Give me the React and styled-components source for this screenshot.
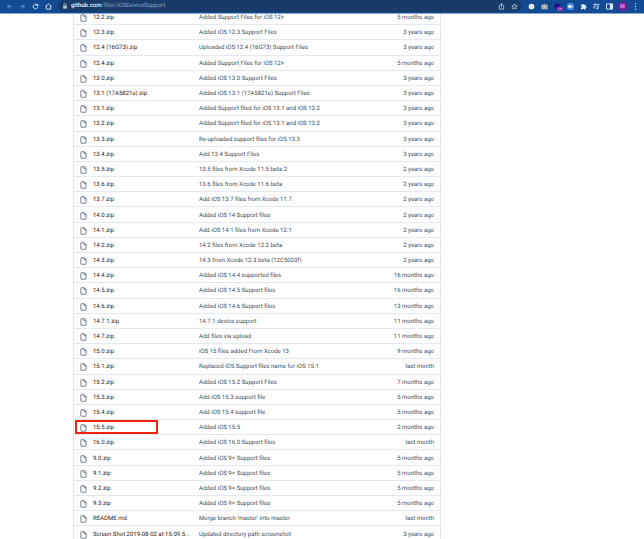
import React from "react";
import styled, { createGlobalStyle } from "styled-components";

const GlobalStyle = createGlobalStyle`
  * { box-sizing: border-box; }
  body {
    margin: 0;
    background: #fff;
    color: #4b535c;
    font: 6px/8px Roboto, "Liberation Sans", sans-serif;
    text-rendering: geometricPrecision;
    overflow: hidden;
  }
  button, input { font: inherit; color: inherit; }
`;

const BrowserBar = styled.header`
  position: sticky;
  top: 0;
  z-index: 2;
  display: flex;
  align-items: center;
  height: 14px;
  padding: 0 2px 1px 3px;
  background: #124a94;
  border-bottom: 1px solid #87a9d3;
`;

const ToolButton = styled.button`
  display: flex;
  align-items: center;
  justify-content: center;
  width: 13px;
  height: 11px;
  padding: 0;
  border: 0;
  background: none;
  color: ${(p) => (p.$dim ? "#6e94c6" : "#e4ecf7")};
  svg { display: block; overflow: visible; }
`;

const AddressBox = styled.div`
  flex: 1;
  display: flex;
  align-items: center;
  height: 12px;
  margin-left: 3px;
  padding: 0 1px 0 4px;
  border-radius: 6px;
  background: #183b6b;
  color: #b3c1d6;
`;

const Url = styled.a`
  flex: 1;
  margin-left: 3px;
  color: #8da3c2;
  text-decoration: none;
  white-space: nowrap;
  b { color: #f0f4fa; font-weight: 500; }
`;

const Extensions = styled.nav`
  display: flex;
  margin-left: 3px;
`;

const Avatar = styled.span`
  width: 9px;
  height: 9px;
  border-radius: 50%;
  background: #7b1fa2;
  color: #f3dcfa;
  font-size: 5px;
  line-height: 9px;
  text-align: center;
`;

const FileTable = styled.table`
  width: calc(100% - 276px);
  height: calc(100vh - 7px);
  margin: -4px 0 0 73px;
  border: solid #e3e8ee;
  border-width: 0 1px;
  border-spacing: 0;
  table-layout: fixed;
`;

const Cell = styled.td`
  padding: 2px 0 0;
  border-bottom: 1px solid #e5e9ee;
  vertical-align: middle;
  white-space: nowrap;
  color: #454d57;
`;

const NameCell = styled(Cell).attrs({ as: "th", scope: "row" })`
  position: relative;
  width: 125px;
  font-weight: 400;
  text-align: left;
`;

const AgeCell = styled(Cell)`
  width: 60px;
  padding-right: 6px;
  text-align: right;
`;

const FileLink = styled.a`
  display: flex;
  align-items: center;
  gap: 6px;
  padding-left: 6px;
  color: #1f2328;
  text-decoration: none;
  svg { flex: none; display: block; }
`;

const Highlight = styled.i`
  position: absolute;
  inset: 0 41px 0 1px;
  border: 2px solid #f3220b;
  pointer-events: none;
`;

const Glyph = ({ size = 7, children }) => (
  <svg width={size} height={size} viewBox="0 0 16 16" fill="none" stroke="currentColor" strokeWidth="2" aria-hidden="true">
    {children}
  </svg>
);

const FileIcon = () => (
  <svg width="7" height="8" viewBox="0 0 14 16" fill="none" stroke="#59636e" strokeWidth="1.6" aria-hidden="true">
    <path d="M2.6 1.500h6.2l3.4 3.5v8.6q0 .9-.9.9H2.6q-.9 0-.9-.9V2.4q0-.9.9-.9zM8.2 1.5v4h4" />
  </svg>
);

const navigation = [
  { label: "Back", dim: true, art: <path d="M14 8H3M8 3L3 8l5 5" /> },
  { label: "Forward", dim: true, art: <path d="M2 8h11M8 3l5 5-5 5" /> },
  { label: "Reload", art: <><path d="M12.6 5A5.4 5.4 0 1 0 13.4 9" /><path d="M14 1v6H8z" fill="currentColor" stroke="none" /></> },
  { label: "Home", art: <path d="M1 8l7-6 7 6M3 7v7h10V7" /> },
];

const pageActions = [
  { label: "Share", art: <path strokeWidth="1.5" d="M5 6H3v8h10V6h-2M8 10V1.5M5 4l3-3 3 3" /> },
  { label: "Bookmark", art: <path strokeWidth="1.5" d="M8 2l1.9 4 4.3.5-3.2 3 .9 4.4L8 11.7l-3.9 2.2.9-4.4-3.2-3L6.1 6z" /> },
];

const extensions = [
  { label: "JSON viewer", art: <><circle cx="8" cy="8" r="6.5" fill="#f4f2ea" stroke="none" /><path d="M6 5.5L4.5 8 6 10.5M10 5.5L11.5 8 10 10.5" stroke="#9aa0a8" strokeWidth="1" /></> },
  { label: "Screen capture", art: <><path d="M1 4h4l1-2h4l1 2h4v10H1z" fill="#b9b9b4" stroke="none" /><circle cx="8" cy="9" r="2.8" fill="#e8e8e3" stroke="#7b7f83" strokeWidth="1.5" /></> },
  { label: "Tag assistant", art: <><path d="M7-1l8 8-8 8-8-8z" fill="#2a0a92" stroke="none" /><rect x="7" y="9" width="13" height="9" rx="1" fill="#8435b5" stroke="none" /><path d="M9.5 13.5h3M14 13.5h4" stroke="#ddb5f0" /></> },
  { label: "Video meetings", art: <><rect x="0" y="0" width="16" height="16" rx="6" fill="#3f8df5" stroke="none" /><path d="M3 5h7v6H3zM10.5 8L13 5.5v5z" fill="#fff" stroke="none" /></> },
  { label: "Extensions", art: <path d="M2 4h3.5a2 2 0 1 1 4 0H13v3.5a2 2 0 1 1 0 4V15H9a2 2 0 1 0-4 0H2v-4a2 2 0 1 0 0-4z" fill="currentColor" stroke="none" /> },
  { label: "Media controls", art: <><path d="M1 3h9M1 7h7M1 11h4M11.5 12V3H15" /><circle cx="10" cy="12" r="2" fill="currentColor" stroke="none" /></> },
  { label: "Side panel", art: <><path d="M1 2h14v12H1z" /><path d="M9 2h6v12H9z" fill="currentColor" stroke="none" /></> },
];

const files = [
  ["12.2.zip", "Added Support Files for iOS 12+", "5 months ago"],
  ["12.3.zip", "Added iOS 12.3 Support Files", "3 years ago"],
  ["12.4 (16G73).zip", "Uploaded iOS 12.4 (16G73) Support Files", "3 years ago"],
  ["12.4.zip", "Added Support Files for iOS 12+", "5 months ago"],
  ["13.0.zip", "Added iOS 13.0 Support Files", "3 years ago"],
  ["13.1 (17A5821e).zip", "Added iOS 13.1 (17A5821e) Support Files", "3 years ago"],
  ["13.1.zip", "Added Support filed for iOS 13.1 and iOS 13.2", "3 years ago"],
  ["13.2.zip", "Added Support filed for iOS 13.1 and iOS 13.2", "3 years ago"],
  ["13.3.zip", "Re-uploaded support files for iOS 13.3", "3 years ago"],
  ["13.4.zip", "Add 13.4 Support Files", "3 years ago"],
  ["13.5.zip", "13.5 files from Xcode 11.5 beta 2", "2 years ago"],
  ["13.6.zip", "13.6 files from Xcode 11.6 beta", "2 years ago"],
  ["13.7.zip", "Add iOS 13.7 files from Xcode 11.7", "2 years ago"],
  ["14.0.zip", "Added iOS 14 Support files", "2 years ago"],
  ["14.1.zip", "Add iOS 14.1 files from Xcode 12.1", "2 years ago"],
  ["14.2.zip", "14.2 files from Xcode 12.2 beta", "2 years ago"],
  ["14.3.zip", "14.3 from Xcode 12.3 beta (12C5020f)", "2 years ago"],
  ["14.4.zip", "Added iOS 14.4 supported files", "16 months ago"],
  ["14.5.zip", "Added iOS 14.5 Support files", "16 months ago"],
  ["14.6.zip", "Added iOS 14.6 Support files", "13 months ago"],
  ["14.7.1.zip", "14.7.1 device support", "11 months ago"],
  ["14.7.zip", "Add files via upload", "11 months ago"],
  ["15.0.zip", "iOS 15 files added From Xcode 13", "9 months ago"],
  ["15.1.zip", "Replaced iOS Support files name for iOS 15.1", "last month"],
  ["15.2.zip", "Added iOS 15.2 Support Files", "7 months ago"],
  ["15.3.zip", "Add iOS 15.3 support file", "5 months ago"],
  ["15.4.zip", "Add iOS 15.4 support file", "5 months ago"],
  ["15.5.zip", "Added iOS 15.5", "2 months ago", true],
  ["16.0.zip", "Added iOS 16.0 Support files", "last month"],
  ["9.0.zip", "Added iOS 9+ Support files", "5 months ago"],
  ["9.1.zip", "Added iOS 9+ Support files", "5 months ago"],
  ["9.2.zip", "Added iOS 9+ Support files", "5 months ago"],
  ["9.3.zip", "Added iOS 9+ Support files", "5 months ago"],
  ["README.md", "Merge branch 'master' into master", "last month"],
  ["Screen Shot 2019-08-02 at 15.09.5...", "Updated directory path screenshot", "3 years ago"],
];

const Tool = ({ item }) => (
  <ToolButton type="button" aria-label={item.label} $dim={item.dim}>
    <Glyph>{item.art}</Glyph>
  </ToolButton>
);

export default function App() {
  return (
    <>
      <GlobalStyle />
      <BrowserBar>
        {navigation.map((item) => <Tool key={item.label} item={item} />)}
        <AddressBox>
          <Glyph size={6}>
            <path d="M3 7h10v8H3z" fill="currentColor" stroke="none" />
            <path d="M5 8V4.5a3 3 0 0 1 6 0V8" />
          </Glyph>
          <Url href="#repository"><b>github.com</b>/filsv/iOSDeviceSupport</Url>
          {pageActions.map((item) => <Tool key={item.label} item={item} />)}
        </AddressBox>
        <Extensions>
          {extensions.map((item) => <Tool key={item.label} item={item} />)}
          <ToolButton type="button" aria-label="Profile"><Avatar>M</Avatar></ToolButton>
          <ToolButton type="button" aria-label="Menu">
            <Glyph>
              <g fill="currentColor" stroke="none">
                <circle cx="8" cy="2" r="1.5" /><circle cx="8" cy="8" r="1.5" /><circle cx="8" cy="14" r="1.5" />
              </g>
            </Glyph>
          </ToolButton>
        </Extensions>
      </BrowserBar>
      <FileTable>
        <tbody>
          {files.map(([name, message, age, marked]) => (
            <tr key={name}>
              <NameCell>
                <FileLink href="#file"><FileIcon /><span>{name}</span></FileLink>
                {marked && <Highlight />}
              </NameCell>
              <Cell>{message}</Cell>
              <AgeCell>{age}</AgeCell>
            </tr>
          ))}
        </tbody>
      </FileTable>
    </>
  );
}
